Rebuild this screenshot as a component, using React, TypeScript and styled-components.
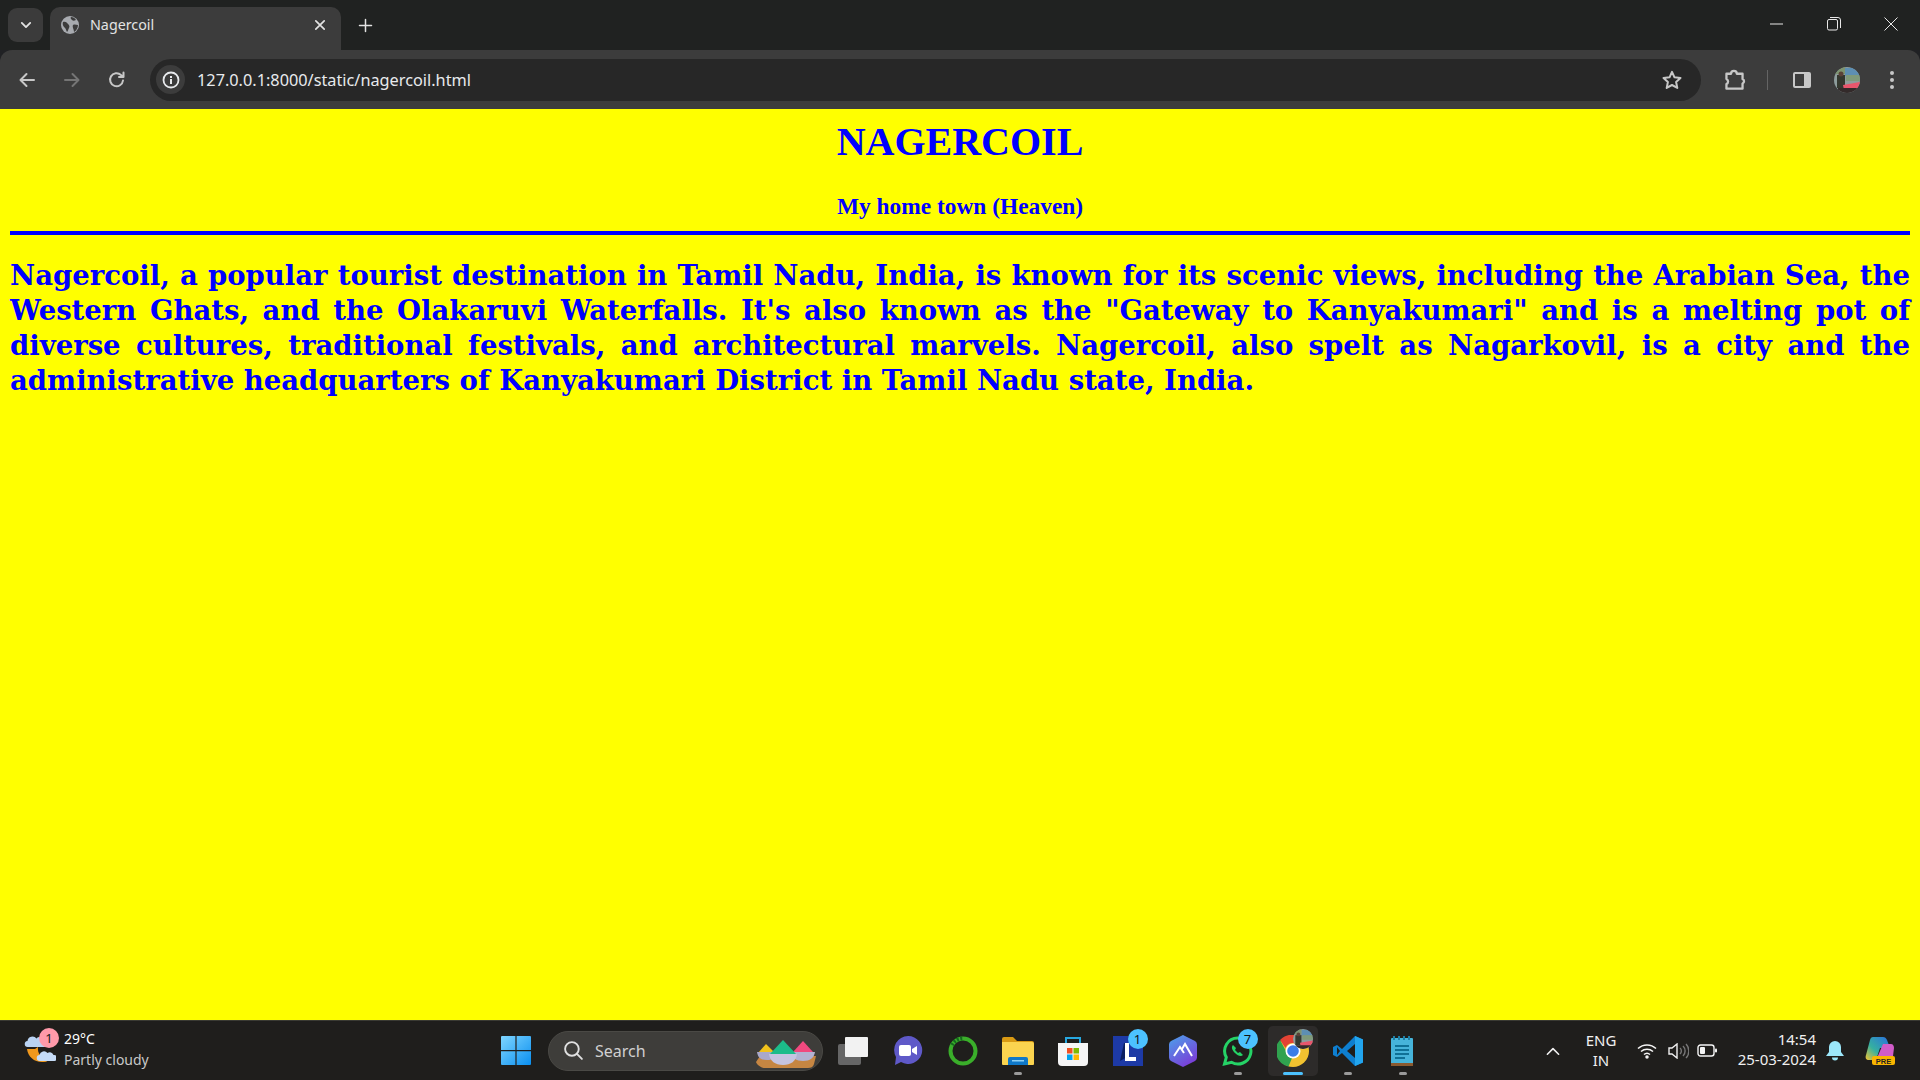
import React from "react";
import styled, { createGlobalStyle } from "styled-components";

const Global = createGlobalStyle`
  html, body { margin: 0; padding: 0; height: 100%; overflow: hidden; }
  #root { height: 100%; }
`;

const uiFont = `"Noto Sans", "Open Sans", "Liberation Sans", sans-serif`;

const Frame = styled.div`
  display: flex;
  flex-direction: column;
  height: 1080px;
  background: #202124;
  font-family: ${uiFont};
`;

const TabStrip = styled.header`
  display: flex;
  align-items: flex-end;
  height: 50px;
  flex: none;
  background: #202221;
  padding-left: 8px;
`;

const TabSearch = styled.div`
  width: 35px;
  height: 34px;
  align-self: flex-start;
  margin-top: 8px;
  border-radius: 9px;
  background: #3b3b3b;
  display: flex;
  align-items: center;
  justify-content: center;
`;

const Tab = styled.div`
  width: 291px;
  height: 43px;
  margin-left: 7px;
  padding: 0 14px 8px 11px;
  box-sizing: border-box;
  border-radius: 10px 10px 0 0;
  background: #3c3c3c;
  display: flex;
  align-items: center;
  gap: 11px;
  color: #e3e3e3;
`;

const TabTitle = styled.span`
  flex: 1;
  font-size: 14.3px;
  line-height: 18px;
`;

const NewTab = styled.div`
  width: 28px;
  height: 42px;
  margin-left: 10px;
  align-self: flex-start;
  display: flex;
  align-items: center;
  justify-content: center;
  margin-top: 4px;
`;

const WindowControls = styled.div`
  margin-left: auto;
  align-self: flex-start;
  display: flex;
  height: 50px;
  padding-right: 1px;
`;

const WinButton = styled.div`
  width: 57px;
  height: 48px;
  display: flex;
  align-items: center;
  justify-content: center;
`;

const Toolbar = styled.div`
  display: flex;
  align-items: center;
  height: 59px;
  flex: none;
  background: #3c3c3c;
  border-radius: 12px 12px 0 0;
  padding-right: 6px;
  padding-left: 4px;
`;

const NavButton = styled.div<{ $w?: number }>`
  width: ${(p) => p.$w ?? 45}px;
  height: 36px;
  display: flex;
  align-items: center;
  justify-content: center;
  flex: none;
`;

const Omnibox = styled.div`
  flex: 1;
  height: 42px;
  margin-left: 11px;
  margin-right: 11px;
  border-radius: 21px;
  background: #272727;
  display: flex;
  align-items: center;
  padding-left: 6px;
  padding-right: 19px;
`;

const InfoChip = styled.div`
  width: 29px;
  height: 29px;
  border-radius: 50%;
  background: #3c3c3c;
  display: flex;
  align-items: center;
  justify-content: center;
  flex: none;
`;

const Url = styled.span`
  flex: 1;
  margin-left: 12px;
  color: #e8eaed;
  font-size: 16.3px;
  line-height: 20px;
`;

const Divider = styled.div`
  width: 1px;
  height: 20px;
  background: #646464;
  margin: 0 11px 0 10px;
`;

const Page = styled.main`
  flex: 1;
  background: #ffff00;
  color: #0000ff;
  padding: 0 10px;
  font-weight: bold;
  overflow: hidden;
`;

const Heading = styled.h1`
  margin: 10px 0 0;
  font-family: "Liberation Serif", "Times New Roman", serif;
  font-size: 40px;
  line-height: 46px;
  text-align: center;
`;

const SubHeading = styled.h3`
  margin: 28px 0 0;
  font-family: "Liberation Serif", "Times New Roman", serif;
  font-size: 23.4px;
  line-height: 27px;
  text-align: center;
`;

const Rule = styled.hr`
  margin: 11px 0 0;
  height: 4px;
  border: 0;
  background: #0000ff;
`;

const Paragraph = styled.p`
  margin: 23px 0 0;
  font-family: "DejaVu Serif", "Liberation Serif", serif;
  font-size: 27.5px;
  line-height: 35px;
  text-align: justify;
`;

const Taskbar = styled.footer`
  height: 60px;
  flex: none;
  background: #1f1e1c;
  border-top: 1px solid #3a3a33;
  box-sizing: border-box;
  display: grid;
  grid-template-columns: 488px 1fr 420px;
  color: #fff;
`;

const Weather = styled.div`
  display: flex;
  align-items: center;
  padding-left: 24px;
  position: relative;
`;

const WeatherBadge = styled.span`
  position: absolute;
  left: 39px;
  top: 7px;
  width: 20px;
  height: 20px;
  border-radius: 50%;
  background: #ff9aaa;
  color: #1c1c1c;
  font-size: 13px;
  line-height: 20px;
  text-align: center;
`;

const WeatherText = styled.div`
  margin-left: 8px;
  margin-top: -4px;
  display: flex;
  flex-direction: column;
  font-size: 14px;
  line-height: 21px;
`;

const Temp = styled.span`
  color: #fff;
`;

const Cond = styled.span`
  color: #c8c8c8;
`;

const Center = styled.div`
  display: flex;
  align-items: center;
`;

const StartSlot = styled.div`
  width: 56px;
  display: flex;
  justify-content: center;
`;

const Search = styled.div`
  width: 275px;
  height: 40px;
  box-sizing: border-box;
  margin-left: 4px;
  margin-right: 2px;
  border-radius: 20px;
  background: #3e3d3a;
  border: 1px solid #4a4945;
  display: flex;
  align-items: center;
  padding-left: 14px;
  gap: 11px;
  color: #d0d0d0;
  font-size: 16px;
  position: relative;
`;

const SearchArt = styled.div`
  position: absolute;
  right: 3px;
  top: 8px;
  line-height: 0;
`;

const Slot = styled.div<{ $active?: boolean }>`
  width: 50px;
  height: 50px;
  margin: 0 2.5px;
  border-radius: 5px;
  display: flex;
  align-items: center;
  justify-content: center;
  position: relative;
  background: ${(p) => (p.$active ? "#2d2b2a" : "transparent")};
  flex: none;
`;

const Running = styled.span<{ $active?: boolean }>`
  position: absolute;
  left: 50%;
  bottom: 1px;
  transform: translateX(-50%);
  width: ${(p) => (p.$active ? 20 : 8)}px;
  height: 3px;
  border-radius: 2px;
  background: ${(p) => (p.$active ? "#4cc2ff" : "#9a9a9a")};
`;

const CountBadge = styled.span<{ $plain?: boolean }>`
  position: absolute;
  left: 25px;
  top: 3px;
  width: 20px;
  height: 20px;
  border-radius: 50%;
  background: ${(p) => (p.$plain ? "transparent" : "#4cc2ff")};
  color: #111;
  font-size: 13px;
  line-height: 20px;
  text-align: center;
`;

const Tray = styled.div`
  display: flex;
  align-items: center;
  justify-content: flex-end;
  padding-right: 14px;
`;

const TrayIcon = styled.div<{ $w: number }>`
  width: ${(p) => p.$w}px;
  display: flex;
  justify-content: center;
  align-items: center;
  flex: none;
`;

const Lang = styled.div`
  width: 50px;
  margin: -2px 3px 0 8px;
  text-align: center;
  font-size: 15px;
  line-height: 20px;
  color: #f0f0f0;
  flex: none;
`;

const Clock = styled.div`
  width: 90px;
  text-align: right;
  font-size: 15px;
  line-height: 20px;
  color: #f0f0f0;
  margin: -3px 0 0 3px;
  flex: none;
  white-space: nowrap;
`;

const Avatar = ({ size, id }: { size: number; id: string }) => (
  <svg width={size} height={size} viewBox="0 0 26 26">
    <defs>
      <clipPath id={id}><circle cx="13" cy="13" r="13" /></clipPath>
    </defs>
    <g clipPath={`url(#${id})`}>
      <rect width="26" height="26" fill="#8d9c9c" />
      <rect x="11" y="1" width="15" height="8" fill="#5d8fb3" />
      <rect x="12" y="8" width="14" height="6" fill="#7f9a7a" />
      <rect y="0" width="11" height="7" fill="#7d9470" />
      <rect x="3" y="8" width="8" height="13" fill="#34382f" />
      <circle cx="7" cy="7" r="2.500" fill="#5a4238" />
      <path d="M9 18l17-3v5l-6 3H10z" fill="#e8566c" />
      <path d="M4 21h22v5H4z" fill="#332a2a" />
    </g>
  </svg>
);

const Globe = () => (
  <svg width="18" height="18" viewBox="0 0 18 18">
    <circle cx="9" cy="9" r="9" fill="#a8abb0" />
    <path d="M2 6c3-1 4 1 5 2s2 2 1 4-1 3-2 4c-1-2-1-3-2-4S1 9 2 6zM10 1c2 0 4 1 5 3-2 1-3 1-4 0s-2-2-1-3zM12 9c2-1 3 0 5 0 0 3-2 6-4 7 0-3-2-5-1-7z" fill="#3c3c3c" />
  </svg>
);

const Stroke = ({ d, color = "#c7c7c7", size = 20, w = 2 }: { d: string; color?: string; size?: number; w?: number }) => (
  <svg width={size} height={size} viewBox="0 0 20 20" fill="none" stroke={color} strokeWidth={w} strokeLinecap="round" strokeLinejoin="round">
    <path d={d} />
  </svg>
);

const WinLogo = () => (
  <svg width="30" height="29" viewBox="0 0 30 29">
    <defs>
      <linearGradient id="wl" x1="0" y1="0" x2="1" y2="1">
        <stop offset="0" stopColor="#7fd6ff" />
        <stop offset="1" stopColor="#0a8ff0" />
      </linearGradient>
    </defs>
    <path d="M0 1a1 1 0 0 1 1-1h13.4v14H0zM15.6 0H29a1 1 0 0 1 1 1v13H15.6zM0 15.2h14.4V29H1a1 1 0 0 1-1-1zM15.6 15.2H30V28a1 1 0 0 1-1 1H15.6z" fill="url(#wl)" />
  </svg>
);

const Bowls = () => (
  <svg width="64" height="28" viewBox="0 0 64 28">
    <path d="M1 22l4-6h56l-2 8c-1 3-3 4-6 4H10c-4 0-8-3-9-6z" fill="#c68642" />
    <path d="M3 13l8-9 9 9z" fill="#f1c21b" />
    <path d="M2 12h20c-1 6-4 8-10 8S3 18 2 12z" fill="#a9a8c9" />
    <path d="M38 12L48 1l10 11z" fill="#f0497f" />
    <path d="M36 12h24c-1 6-5 9-12 9s-11-3-12-9z" fill="#b3b2d2" />
    <path d="M15 14L28 0l13 14z" fill="#1cbc8a" />
    <path d="M14 14h28c-1 7-6 11-14 11s-13-4-14-11z" fill="#c5c4e0" />
  </svg>
);

const Meet = () => (
  <svg width="30" height="32" viewBox="0 0 30 32">
    <path d="M15 1a14 14 0 1 1-7 26l-6 3 1-8A14 14 0 0 1 15 1z" fill="#5f59c8" />
    <rect x="6" y="10" width="12" height="11" rx="2" fill="#fff" />
    <path d="M19 14l5-3v9l-5-3z" fill="#fff" />
  </svg>
);

const Ring = () => (
  <svg width="32" height="32" viewBox="0 0 32 32" fill="none">
    <circle cx="16" cy="16" r="12.5" stroke="#3aae2a" strokeWidth="4" />
    <path d="M5 10A12.500 12.500 0 0 1 16 3.500" stroke="#14681e" strokeWidth="4" strokeDasharray="2 1.500" />
  </svg>
);

const Folder = () => (
  <svg width="32" height="28" viewBox="0 0 32 28">
    <path d="M0 2a2 2 0 0 1 2-2h9l4 4h15a2 2 0 0 1 2 2v4H0z" fill="#d99a13" />
    <path d="M0 5h30a2 2 0 0 1 2 2v20a1 1 0 0 1-1 1H1a1 1 0 0 1-1-1z" fill="#fbd44f" />
    <path d="M6 28v-6a2 2 0 0 1 2-2h16a2 2 0 0 1 2 2v6z" fill="#0f78c8" />
    <rect x="10" y="23" width="12" height="1.500" fill="#8cd0f5" />
  </svg>
);

const Store = () => (
  <svg width="30" height="30" viewBox="0 0 30 30" fill="none">
    <path d="M8 7V2h14v5" stroke="#27a8e0" strokeWidth="2" />
    <path d="M0 7h30v19a4 4 0 0 1-4 4H4a4 4 0 0 1-4-4z" fill="#f5f5f5" />
    <rect x="9" y="12" width="5.500" height="5.500" fill="#f25022" />
    <rect x="15.500" y="12" width="5.500" height="5.500" fill="#7fba00" />
    <rect x="9" y="18.500" width="5.500" height="5.500" fill="#00a4ef" />
    <rect x="15.500" y="18.500" width="5.500" height="5.500" fill="#ffb900" />
  </svg>
);

const Ltile = () => (
  <svg width="30" height="30" viewBox="0 0 30 30">
    <rect width="30" height="30" fill="#1d3aa6" />
    <path d="M7 25l4-18h4l-1 14z" fill="#0b1f60" />
    <path d="M12 7h4v14h7v4H12z" fill="#fff" />
  </svg>
);

const Atom = () => (
  <svg width="28" height="32" viewBox="0 0 28 32" fill="none">
    <defs>
      <linearGradient id="at" x1="0" y1="0" x2="0.6" y2="1">
        <stop offset="0" stopColor="#4aa3ea" />
        <stop offset="1" stopColor="#7a3fd8" />
      </linearGradient>
    </defs>
    <path d="M14 0l12 6a4 4 0 0 1 2 3.500v13a4 4 0 0 1-2 3.500l-12 6-12-6a4 4 0 0 1-2-3.500v-13A4 4 0 0 1 2 6z" fill="url(#at)" />
    <path d="M5 21l6-9 4 6M13 14l3-5 7 12" stroke="#fff" strokeWidth="2" />
  </svg>
);

const WhatsApp = () => (
  <svg width="32" height="32" viewBox="0 0 32 32" fill="none">
    <path d="M16 3a13 13 0 1 1-6.500 24.300L2.500 29l1.800-6.700A13 13 0 0 1 16 3z" stroke="#25d366" strokeWidth="3" />
    <path d="M11 10c-2 2-1 5 2 8s6 4 8 2l-3-3-2 1-3-3 1-2z" fill="#25d366" />
  </svg>
);

const Chrome = () => (
  <svg width="32" height="32" viewBox="0 0 32 32">
    <circle cx="16" cy="16" r="16" fill="#f2c230" />
    <path d="M16 0a16 16 0 0 1 14 8H16a8 8 0 0 0-7.500 5L3 5a16 16 0 0 1 13-5z" fill="#e34234" />
    <path d="M3 5l6 11a8 8 0 0 0 6 7l-3.500 8.500A16 16 0 0 1 3 5z" fill="#30a24f" />
    <circle cx="16" cy="16" r="7.500" fill="#fff" />
    <circle cx="16" cy="16" r="5.800" fill="#3b7de8" />
  </svg>
);

const VSCode = () => (
  <svg width="30" height="30" viewBox="0 0 30 30">
    <path d="M22 0l8 3.500v23L22 30 9 17l-5 4-4-2v-8l4-2 5 4z" fill="#0e7fd0" />
    <path d="M22 0l8 3.500v23L22 30z" fill="#22a5ee" />
    <path d="M22 8l-8 7 8 7z" fill="#1f1e1c" />
    <path d="M4 11l3 4-3 4z" fill="#1f1e1c" />
  </svg>
);

const Notepad = () => (
  <svg width="24" height="30" viewBox="0 0 24 30">
    <rect y="2" width="22" height="28" rx="1" fill="#46b4da" />
    <rect y="27" width="22" height="3" fill="#8a5a30" />
    <path d="M3 0v4M8 0v4M13 0v4M18 0v4" stroke="#1e7fa5" strokeWidth="2" />
    <path d="M4 10h14M4 14h14M4 18h14M4 22h10" stroke="#0f7196" strokeWidth="2" />
  </svg>
);

const Copilot = () => (
  <svg width="30" height="30" viewBox="0 0 30 30">
    <defs>
      <linearGradient id="cp" x1="0" y1="1" x2="1" y2="0">
        <stop offset="0" stopColor="#f4c430" />
        <stop offset="0.4" stopColor="#35b0a0" />
        <stop offset="1" stopColor="#2a6fe0" />
      </linearGradient>
    </defs>
    <path d="M8 1h10c2 0 3 1 4 3l3 8H15l-4 12H4c-3 0-4-2-3-5L5 4c.5-2 1.500-3 3-3z" fill="url(#cp)" />
    <path d="M18 8h8c2 0 3 2 3 4l-1 8c0 1-1 2-2 2H12z" fill="#d05cc8" />
    <rect x="7" y="20" width="23" height="9" rx="2" fill="#f9b500" />
    <text x="18.500" y="27.500" fontSize="7.500" fontWeight="700" fontFamily="Liberation Sans, sans-serif" textAnchor="middle" fill="#222">PRE</text>
  </svg>
);

const Weathericon = () => (
  <svg width="32" height="34" viewBox="0 0 32 34">
    <path d="M3 15c1 8 8 14 17 13 3 0 5-2 6-5-7 2-13-2-12-10l-3 2z" fill="#f0981c" />
    <path d="M4 13a3 3 0 0 1-.5-6 5 5 0 0 1 9-2.500 4 4 0 0 1 7 2.500 3 3 0 0 1 1 6z" fill="#b9d3f3" />
    <path d="M16 27a3 3 0 0 1-.5-6 4.500 4.500 0 0 1 8-2 4 4 0 0 1 6 2 3 3 0 0 1 1 6z" fill="#c6dcf7" />
  </svg>
);

export default function App() {
  return (
    <Frame>
      <Global />
      <TabStrip>
        <TabSearch>
          <Stroke size={14} color="#e3e3e3" w={2.600} d="M4 7l6 6 6-6" />
        </TabSearch>
        <Tab>
          <Globe />
          <TabTitle>Nagercoil</TabTitle>
          <Stroke size={14} color="#e3e3e3" w={2.400} d="M4 4l12 12M16 4L4 16" />
        </Tab>
        <NewTab>
          <Stroke size={15} color="#e3e3e3" w={2} d="M10 2v16M2 10h16" />
        </NewTab>
        <WindowControls>
          <WinButton>
            <svg width="13" height="2" viewBox="0 0 13 2"><path d="M0 1h13" stroke="#e8e8e8" /></svg>
          </WinButton>
          <WinButton>
            <svg width="14" height="14" viewBox="0 0 14 14" fill="none" stroke="#e8e8e8">
              <rect x="0.500" y="2.500" width="10" height="10.500" rx="1.500" />
              <path d="M3 .5h8a2.500 2.500 0 0 1 2.500 2.500v8" />
            </svg>
          </WinButton>
          <WinButton>
            <svg width="14" height="14" viewBox="0 0 14 14"><path d="M.5.5l13 13M13.500.5l-13 13" stroke="#e8e8e8" /></svg>
          </WinButton>
        </WindowControls>
      </TabStrip>
      <Toolbar>
        <NavButton>
          <Stroke color="#c7c7c7" d="M17 10H4M9.500 4L3.500 10l6 6" />
        </NavButton>
        <NavButton>
          <Stroke color="#757575" d="M3 10h13M10.500 4l6 6-6 6" />
        </NavButton>
        <NavButton>
          <Stroke color="#c7c7c7" d="M16 10.500a6.500 6.500 0 1 1-2-5.500L16.500 7M16.500 2.500V7H12" />
        </NavButton>
        <Omnibox>
          <InfoChip>
            <svg width="18" height="18" viewBox="0 0 18 18" fill="none">
              <circle cx="9" cy="9" r="7.500" stroke="#e8eaed" strokeWidth="1.800" />
              <rect x="8" y="8" width="2" height="5" fill="#e8eaed" />
              <rect x="8" y="5" width="2" height="2" fill="#e8eaed" />
            </svg>
          </InfoChip>
          <Url>127.0.0.1:8000/static/nagercoil.html</Url>
          <svg width="20" height="20" viewBox="0 0 20 20" fill="none">
            <path d="M10 1.800l2.500 5.500 6 .7-4.400 4 1.200 5.900L10 15l-5.300 2.900 1.200-5.900-4.400-4 6-.7z" stroke="#c7c7c7" strokeWidth="2" strokeLinejoin="round" />
          </svg>
        </Omnibox>
        <NavButton>
          <svg width="23" height="23" viewBox="-1 0 20 20" fill="none">
            <path d="M2 5h4a2.500 2.500 0 0 1 5 0h5v4.500a2.200 2.200 0 0 1 0 4V18H2v-4a2.500 2.500 0 0 0 0-4.500z" stroke="#c7c7c7" strokeWidth="2" strokeLinejoin="round" />
          </svg>
        </NavButton>
        <Divider />
        <NavButton>
          <svg width="18" height="18" viewBox="0 0 18 18">
            <rect x="0" y="1" width="18" height="16" rx="2" fill="#c7c7c7" />
            <rect x="2" y="3" width="9" height="12" fill="#3c3c3c" />
          </svg>
        </NavButton>
        <NavButton $w={46}>
          <Avatar size={26} id="av1" />
        </NavButton>
        <NavButton $w={44}>
          <svg width="4" height="18" viewBox="0 0 4 18" fill="#c7c7c7">
            <circle cx="2" cy="2" r="2" /><circle cx="2" cy="9" r="2" /><circle cx="2" cy="16" r="2" />
          </svg>
        </NavButton>
      </Toolbar>
      <Page>
        <Heading>NAGERCOIL</Heading>
        <SubHeading>My home town (Heaven)</SubHeading>
        <Rule />
        <Paragraph>
          Nagercoil, a popular tourist destination in Tamil Nadu, India, is known for its scenic views, including the Arabian Sea, the Western Ghats, and the Olakaruvi Waterfalls. It's also known as the "Gateway to Kanyakumari" and is a melting pot of diverse cultures, traditional festivals, and architectural marvels. Nagercoil, also spelt as Nagarkovil, is a city and the administrative headquarters of Kanyakumari District in Tamil Nadu state, India.
        </Paragraph>
      </Page>
      <Taskbar>
        <Weather>
          <Weathericon />
          <WeatherBadge>1</WeatherBadge>
          <WeatherText>
            <Temp>29°C</Temp>
            <Cond>Partly cloudy</Cond>
          </WeatherText>
        </Weather>
        <Center>
          <StartSlot><WinLogo /></StartSlot>
          <Search>
            <Stroke size={21} color="#e0e0e0" w={1.800} d="M8.500 2a6.500 6.500 0 1 0 0 13 6.500 6.500 0 0 0 0-13zM13.500 13.500L18 18" />
            Search
            <SearchArt><Bowls /></SearchArt>
          </Search>
          <Slot>
            <svg width="30" height="28" viewBox="0 0 30 28">
              <rect y="7" width="23" height="21" rx="2" fill="#666" />
              <rect x="7" width="23" height="20" rx="1" fill="#f2f2f2" />
            </svg>
          </Slot>
          <Slot><Meet /></Slot>
          <Slot><Ring /></Slot>
          <Slot><Folder /><Running /></Slot>
          <Slot><Store /></Slot>
          <Slot><Ltile /><CountBadge>1</CountBadge></Slot>
          <Slot><Atom /></Slot>
          <Slot><WhatsApp /><CountBadge>7</CountBadge><Running /></Slot>
          <Slot $active>
            <Chrome />
            <CountBadge $plain>
              <Avatar size={20} id="av2" />
            </CountBadge>
            <Running $active />
          </Slot>
          <Slot><VSCode /><Running /></Slot>
          <Slot><Notepad /><Running /></Slot>
        </Center>
        <Tray>
          <TrayIcon $w={30}>
            <Stroke size={16} color="#f0f0f0" w={2} d="M3 14l7-7 7 7" />
          </TrayIcon>
          <Lang>ENG<br />IN</Lang>
          <TrayIcon $w={36}>
            <svg width="20" height="16" viewBox="0 0 20 16" fill="none" stroke="#f5f5f5" strokeWidth="1.500">
              <path d="M1 5.500a13 13 0 0 1 18 0M4 8.500a9 9 0 0 1 12 0M7 11.500a4.500 4.500 0 0 1 6 0" />
              <circle cx="10" cy="14" r="1" fill="#f5f5f5" />
            </svg>
          </TrayIcon>
          <TrayIcon $w={26}>
            <svg width="21" height="16" viewBox="0 0 21 16" fill="none" stroke="#f0f0f0" strokeWidth="1.400">
              <path d="M1 5h3l5-4v14l-5-4H1z" />
              <path d="M12 5a4 4 0 0 1 0 6M15 3a7 7 0 0 1 0 10M18 1a10 10 0 0 1 0 14" stroke="#777" />
            </svg>
          </TrayIcon>
          <TrayIcon $w={32}>
            <svg width="20" height="13" viewBox="0 0 20 13" fill="none">
              <rect x="1" y="1" width="16" height="11" rx="2.500" stroke="#f5f5f5" strokeWidth="1.400" />
              <rect x="3" y="3" width="5" height="7" rx="1" fill="#f5f5f5" />
              <rect x="18" y="4.500" width="2" height="4" rx="1" fill="#f5f5f5" />
            </svg>
          </TrayIcon>
          <Clock>14:54<br />25-03-2024</Clock>
          <TrayIcon $w={38}>
            <svg width="18" height="20" viewBox="0 0 18 20" fill="#9ce8fb">
              <path d="M9 0a6 6 0 0 1 6 6v5l3 4H0l3-4V6a6 6 0 0 1 6-6z" />
              <path d="M6 16.500h6a3 3 0 0 1-6 0z" />
            </svg>
          </TrayIcon>
          <TrayIcon $w={52}>
            <Copilot />
          </TrayIcon>
        </Tray>
      </Taskbar>
    </Frame>
  );
}
